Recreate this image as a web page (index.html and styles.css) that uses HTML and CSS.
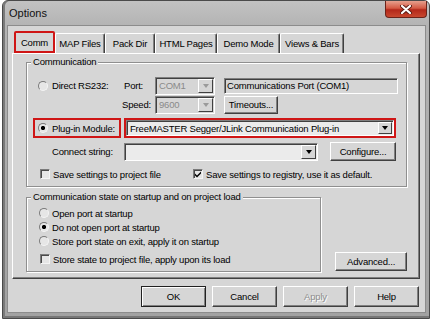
FILE: index.html
```html
<!DOCTYPE html>
<html lang="en">
<head>
    <meta charset="UTF-8">
    <title>Options</title>
    <link rel="stylesheet" href="styles.css">
</head>
<body>
    <div class="window">
        <div class="titlebar">
            <span class="title">Options</span>
            <span class="close">
                <svg width="12" height="9" viewBox="0 0 12 9">
                    <path d="M2 1 L10 8 M10 1 L2 8" stroke="#5a1a12" stroke-width="4" stroke-linecap="round"/>
                    <path d="M2 1 L10 8 M10 1 L2 8" stroke="#fff" stroke-width="2.2" stroke-linecap="round"/>
                </svg>
            </span>
        </div>

        <div class="client">
            <div class="tabs">
                <span class="tab active">Comm</span>
                <span class="tab">MAP Files</span>
                <span class="tab">Pack Dir</span>
                <span class="tab">HTML Pages</span>
                <span class="tab">Demo Mode</span>
                <span class="tab">Views &amp; Bars</span>
            </div>

            <div class="panel">
                <fieldset class="group comm">
                    <legend>Communication</legend>

                    <div class="row r1">
                        <span class="lead"><span class="radio"></span>Direct RS232:</span>
                        <span class="cap">Port:</span>
                        <span class="combo small off"><span class="val">COM1</span><span class="drop"></span></span>
                        <span class="field">Communications Port (COM1)</span>
                    </div>

                    <div class="row r2">
                        <span class="lead"></span>
                        <span class="cap speed">Speed:</span>
                        <span class="combo small off"><span class="val">9600</span><span class="drop"></span></span>
                        <button class="btn timeouts">Timeouts...</button>
                    </div>

                    <div class="row r3">
                        <span class="mark opt"><span class="radio on"></span>Plug-in Module:</span>
                        <span class="mark pick">
                            <span class="combo wide"><span class="val">FreeMASTER Segger/JLink Communication Plug-in</span><span class="drop"></span></span>
                        </span>
                    </div>

                    <div class="row r4">
                        <span class="cap connect">Connect string:</span>
                        <span class="combo conn"><span class="val"></span><span class="drop"></span></span>
                        <button class="btn configure">Configure...</button>
                    </div>

                    <div class="row r5">
                        <span class="check first"><span class="box"></span>Save settings to project file</span>
                        <span class="check"><span class="box">
                            <svg width="8" height="8" viewBox="0 0 8 8"><path d="M1 3.5 L3 5.5 L7 1.5 L7 3.5 L3 7.5 L1 5.5 Z" fill="#000"/></svg>
                        </span>Save settings to registry, use it as default.</span>
                    </div>
                </fieldset>

                <div class="lower">
                    <fieldset class="group state">
                        <legend>Communication state on startup and on project load</legend>
                        <div class="opt-row"><span class="radio"></span>Open port at startup</div>
                        <div class="opt-row"><span class="radio on"></span>Do not open port at startup</div>
                        <div class="opt-row"><span class="radio"></span>Store port state on exit, apply it on startup</div>
                        <div class="opt-row boxed"><span class="box"></span>Store state to project file, apply upon its load</div>
                    </fieldset>
                    <button class="btn advanced">Advanced...</button>
                </div>
            </div>

            <div class="actions">
                <button class="btn default">OK</button>
                <button class="btn">Cancel</button>
                <button class="btn disabled">Apply</button>
                <button class="btn">Help</button>
            </div>
        </div>
    </div>
</body>
</html>
```

FILE: styles.css
```css
* {
    box-sizing: border-box;
}
body {
    margin: 0;
    background-color: #fff;
    font-family: "Liberation Sans", Arial, sans-serif;
    font-size: 9.5px;
    letter-spacing: -0.2px;
    color: #000;
}

/* window frame */
.window {
    margin-left: 2px;
    width: 428px;
    height: 319px;
    border: 1px solid #4a4a4a;
    border-radius: 6px 6px 0 0;
    background: linear-gradient(#c2c2c2, #b4b4b4 24px, #a2a2a2);
    box-shadow: inset 2px 0 #7a7a7a, inset 0 -2px #777;
    padding: 0 3px 5px 4px;
    display: flex;
    flex-direction: column;
}
.titlebar {
    height: 24px;
    display: flex;
    align-items: flex-start;
}
.title {
    font-size: 11px;
    line-height: 13px;
    letter-spacing: 0;
    margin: 6px 0 0 2px;
    color: #111;
}
.close {
    margin-left: auto;
    margin-right: -1px;
    width: 42px;
    height: 17px;
    border: 1px solid #6b231a;
    border-top: 0;
    border-radius: 0 0 4px 4px;
    background: linear-gradient(#e6a08e, #d45a44 45%, #b3281a 55%, #c8482f);
    display: flex;
    align-items: center;
    justify-content: center;
}

.client {
    flex: 1;
    background-color: #d6d6d6;
    border: 1px solid #8c8c8c;
    padding: 3px 5px 0 4px;
    display: flex;
    flex-direction: column;
}

/* tabs */
.tabs {
    display: flex;
    align-items: flex-end;
    height: 24px;
    padding-left: 2px;
}
.tab {
    height: 20px;
    border-top: 1px solid #fff;
    border-left: 1px solid #fff;
    border-right: 1px solid #404040;
    box-shadow: inset -1px 0 #808080;
    border-radius: 2px 2px 0 0;
    display: flex;
    align-items: center;
    justify-content: center;
}
.tab:nth-child(2) { width: 50px; }
.tab:nth-child(3) { width: 50px; }
.tab:nth-child(4) { width: 62px; }
.tab:nth-child(5) { width: 63px; }
.tab:nth-child(6) { width: 64px; }
.tab.active {
    width: 41px;
    height: 22px;
    border: 2px solid #cf1616;
    box-shadow: none;
}

.panel {
    height: 226px;
    border: 1px solid;
    border-color: #fff #404040 #404040 #fff;
    box-shadow: inset -1px -1px #808080;
    padding: 2px 12px 0 13px;
}

/* group boxes */
.group {
    margin: 0;
    border: 1px solid #8f8f8f;
    box-shadow: 1px 1px 0 #fff, inset 1px 1px 0 #fff;
    padding: 8px 6px 6px 6px;
}
legend {
    padding: 0 2px;
    margin-left: -2px;
    line-height: 12px;
    background-color: #d6d6d6;
}

.row {
    display: flex;
    align-items: center;
}
.r1, .r2 {
    height: 19px;
}
.r3 {
    height: 20px;
    margin-top: 4px;
}
.r4 {
    height: 19px;
    margin-top: 4px;
}
.r5 {
    height: 12px;
    margin-top: 7px;
}
.lead {
    width: 89px;
    padding-left: 5px;
    display: flex;
    align-items: center;
    gap: 4px;
}
.cap {
    width: 33px;
    padding-left: 2px;
}
.cap.speed {
    padding-left: 0;
}
.cap.connect {
    width: 91px;
    padding-left: 19px;
}

/* inputs */
.combo {
    display: flex;
    height: 18px;
    border: 1px solid;
    border-color: #808080 #fff #fff #808080;
    box-shadow: inset 1px 1px #404040;
    background-color: #ebebeb;
}
.combo .val {
    flex: 1;
    padding: 0 0 0 3px;
    display: flex;
    align-items: center;
    white-space: nowrap;
    overflow: hidden;
}
.combo.small {
    width: 60px;
}
.combo.off {
    background-color: #d6d6d6;
    color: #8a8a8a;
}
.combo.wide {
    width: 268px;
    height: 16px;
}
.combo.conn {
    width: 194px;
}
.drop {
    width: 15px;
    margin: 1px 1px 1px 0;
    background-color: #d6d6d6;
    border: 1px solid;
    border-color: #fff #404040 #404040 #fff;
    display: flex;
    align-items: center;
    justify-content: center;
}
.drop::after {
    content: "";
    border-left: 3.5px solid transparent;
    border-right: 3.5px solid transparent;
    border-top: 4px solid #000;
}
.combo.off .drop::after {
    border-top-color: #9a9a9a;
}
.combo.wide .drop {
    width: 14px;
}
.field {
    width: 174px;
    height: 16px;
    margin-left: 9px;
    padding-left: 2px;
    border: 1px solid;
    border-color: #808080 #fff #fff #808080;
    box-shadow: inset 1px 1px #404040;
    display: flex;
    align-items: center;
}

.mark {
    height: 20px;
    border: 2px solid #cf1616;
    display: flex;
    align-items: center;
}
.mark.opt {
    width: 88px;
    padding-left: 3px;
    gap: 4px;
}
.mark.pick {
    width: 272px;
    margin-left: 3px;
}

.radio {
    flex: none;
    width: 10px;
    height: 10px;
    border-radius: 50%;
    border: 1px solid;
    border-color: #7a7a7a #f4f4f4 #f4f4f4 #7a7a7a;
    background-color: #e6e6e6;
}
.radio.on {
    background: radial-gradient(circle, #000 1.8px, #e6e6e6 2.4px);
}
.box {
    flex: none;
    width: 10px;
    height: 10px;
    border: 1px solid;
    border-color: #7a7a7a #f4f4f4 #f4f4f4 #7a7a7a;
    box-shadow: inset 1px 1px #4a4a4a;
    background-color: #e6e6e6;
    display: flex;
    align-items: center;
    justify-content: center;
}
.check {
    display: flex;
    align-items: center;
    gap: 3px;
}
.check.first {
    width: 160px;
    padding-left: 7px;
}

/* buttons */
.btn {
    font: inherit;
    letter-spacing: inherit;
    color: #000;
    padding: 0;
    background-color: #d6d6d6;
    border: 1px solid;
    border-color: #fff #404040 #404040 #fff;
    box-shadow: inset -1px -1px #808080;
}
.btn.timeouts {
    width: 54px;
    height: 18px;
    margin-left: 9px;
}
.btn.configure {
    width: 66px;
    height: 19px;
    margin-left: 12px;
}

.lower {
    display: flex;
    align-items: flex-end;
    margin-top: 4px;
}
.group.state {
    width: 296px;
    padding: 3px 6px 5px 6px;
}
.opt-row {
    height: 14px;
    padding-left: 6px;
    display: flex;
    align-items: center;
    gap: 3px;
}
.opt-row.boxed {
    margin-top: 4px;
    padding-left: 7px;
}
.btn.advanced {
    width: 72px;
    height: 19px;
    margin: 0 0 1px 14px;
}

.actions {
    display: flex;
    justify-content: flex-end;
    gap: 6px;
    margin-top: 7px;
    padding-right: 1px;
}
.actions .btn {
    width: 65px;
    height: 21px;
}
.btn.default {
    border-color: #222;
    box-shadow: inset 1px 1px #fff, inset -1px -1px #808080;
}
.btn.disabled {
    color: #8d8d8d;
    text-shadow: 1px 1px #fff;
}
```
